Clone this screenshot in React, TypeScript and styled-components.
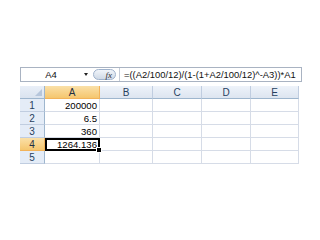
import React from "react";
import styled, { createGlobalStyle } from "styled-components";

const GlobalStyle = createGlobalStyle`
  html, body {
    margin: 0;
    padding: 0;
    background: #ffffff;
  }
  body {
    font-family: "Liberation Sans", Arial, sans-serif;
  }
`;

const Page = styled.div`
  width: 320px;
  height: 240px;
  padding: 67px 0 0 20px;
  box-sizing: border-box;
`;

const FormulaBar = styled.div`
  display: flex;
  align-items: stretch;
  width: 282px;
  height: 15px;
  box-sizing: border-box;
  border: 1px solid #a9b3c2;
  background: #ffffff;
`;

const NameBox = styled.div`
  position: relative;
  display: flex;
  align-items: center;
  justify-content: center;
  width: 70px;
  padding-right: 10px;
  box-sizing: border-box;
  font-size: 9.5px;
  color: #111;
`;

const DropArrow = styled.span`
  position: absolute;
  right: 3px;
  top: 5px;
  width: 0;
  height: 0;
  border-left: 2px solid transparent;
  border-right: 2px solid transparent;
  border-top: 3px solid #222;
`;

const FxArea = styled.div`
  display: flex;
  align-items: center;
  padding: 0 3px 0 2px;
  border-right: 1px solid #c5ccd8;
`;

const FxPill = styled.div`
  display: flex;
  align-items: center;
  justify-content: flex-end;
  width: 23px;
  height: 11px;
  padding-right: 3px;
  box-sizing: border-box;
  border-radius: 6px;
  border: 1px solid #9fb2cc;
  background: linear-gradient(#f1f5fa, #cfd9e6);
  font-family: "Liberation Serif", serif;
  font-style: italic;
  font-size: 9px;
  color: #333;
`;

const FormulaText = styled.div`
  flex: 1;
  display: flex;
  align-items: center;
  padding-left: 4px;
  font-size: 9.4px;
  color: #111;
  white-space: nowrap;
  overflow: hidden;
`;

const Sheet = styled.div`
  display: grid;
  grid-template-columns: 25px 55px 53px 49px 49px 48px;
  grid-auto-rows: 13px;
  width: 279px;
  margin-top: 4px;
`;

const Corner = styled.div`
  position: relative;
  background: linear-gradient(#e9eff8, #dae3ef);
  border-right: 1px solid #9eb6ce;
  border-bottom: 1px solid #9eb6ce;
  box-sizing: border-box;
  &::after {
    content: "";
    position: absolute;
    right: 2px;
    bottom: 2px;
    width: 0;
    height: 0;
    border-left: 7px solid transparent;
    border-bottom: 7px solid #b6c6dc;
  }
`;

const ColHead = styled.div<{ $active?: boolean }>`
  display: flex;
  align-items: center;
  justify-content: center;
  font-size: 10px;
  color: ${(p) => (p.$active ? "#1f2f44" : "#27415f")};
  background: ${(p) =>
    p.$active
      ? "linear-gradient(#fae0a8, #f5c66e)"
      : "linear-gradient(#eef3fa, #dde5f0)"};
  border-right: 1px solid ${(p) => (p.$active ? "#f2b35a" : "#c0cde0")};
  border-bottom: 1px solid ${(p) => (p.$active ? "#f2b35a" : "#9eb6ce")};
  box-sizing: border-box;
`;

const RowHead = styled.div<{ $active?: boolean }>`
  display: flex;
  align-items: center;
  justify-content: center;
  font-size: 10px;
  color: ${(p) => (p.$active ? "#1f2f44" : "#27415f")};
  background: ${(p) =>
    p.$active ? "linear-gradient(#fae0a8, #f5c66e)" : "#e4ecf7"};
  border-right: 1px solid ${(p) => (p.$active ? "#f2b35a" : "#9eb6ce")};
  border-bottom: 1px solid ${(p) => (p.$active ? "#f2b35a" : "#c0cde0")};
  box-sizing: border-box;
`;

const Cell = styled.div<{ $selected?: boolean }>`
  position: relative;
  display: flex;
  align-items: center;
  justify-content: flex-end;
  padding-right: 2px;
  font-size: 9.6px;
  color: #000;
  background: #fff;
  border-right: 1px solid #d6dce7;
  border-bottom: 1px solid #d6dce7;
  box-sizing: border-box;
  white-space: nowrap;
  ${(p) =>
    p.$selected &&
    `
    outline: 2px solid #000;
    outline-offset: -2px;
    z-index: 1;
    &::after {
      content: "";
      position: absolute;
      right: -3px;
      bottom: -3px;
      width: 4px;
      height: 4px;
      background: #000;
      border: 1px solid #fff;
    }
  `}
`;

const columns = ["A", "B", "C", "D", "E"];
const values: Record<number, string> = {
  1: "200000",
  2: "6.5",
  3: "360",
  4: "1264.136",
};

export default function App() {
  return (
    <>
      <GlobalStyle />
      <Page>
        <FormulaBar>
          <NameBox>
            A4
            <DropArrow />
          </NameBox>
          <FxArea>
            <FxPill>fx</FxPill>
          </FxArea>
          <FormulaText>=((A2/100/12)/(1-(1+A2/100/12)^-A3))*A1</FormulaText>
        </FormulaBar>
        <Sheet>
          <Corner />
          {columns.map((c) => (
            <ColHead key={c} $active={c === "A"}>
              {c}
            </ColHead>
          ))}
          {[1, 2, 3, 4, 5].map((r) => (
            <React.Fragment key={r}>
              <RowHead $active={r === 4}>{r}</RowHead>
              {columns.map((c) => (
                <Cell key={c} $selected={c === "A" && r === 4}>
                  {c === "A" ? values[r] ?? "" : ""}
                </Cell>
              ))}
            </React.Fragment>
          ))}
        </Sheet>
      </Page>
    </>
  );
}
